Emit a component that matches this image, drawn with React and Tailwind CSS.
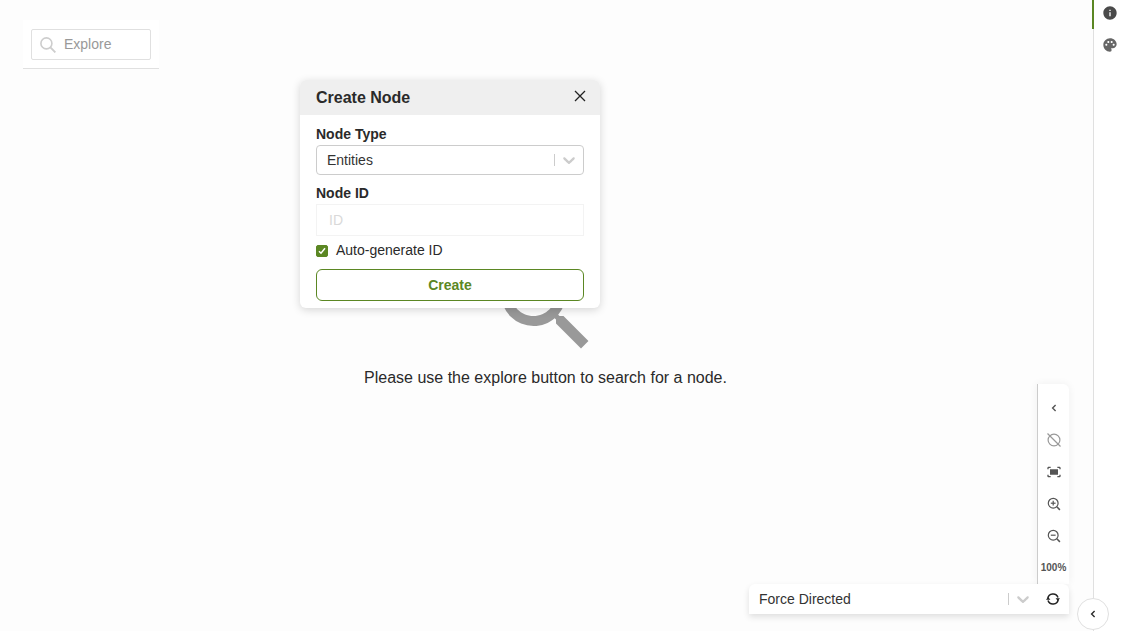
import { useState } from "react";
import { MdFitScreen, MdInfo, MdPalette, MdSearch } from "react-icons/md";

function ChevronDown() {
  return (
    <svg className="size-5 fill-[#cccccc]" viewBox="0 0 20 20" aria-hidden="true">
      <path d="M4.516 7.548c0.436-0.446 1.043-0.481 1.576 0l3.908 3.747 3.908-3.747c0.533-0.481 1.141-0.446 1.574 0 0.436 0.445 0.408 1.197 0 1.615-0.406 0.418-4.695 4.502-4.695 4.502-0.217 0.223-0.502 0.335-0.787 0.335s-0.57-0.112-0.789-0.335c0 0-4.287-4.084-4.695-4.502s-0.436-1.17 0-1.615z" />
    </svg>
  );
}

function ChevronLeft() {
  return (
    <svg className="size-4" viewBox="0 0 16 16" fill="none" stroke="currentColor" strokeWidth="1.4" aria-hidden="true">
      <path d="M9.6 5 6.6 8l3 3" />
    </svg>
  );
}

function ThinSearch() {
  return (
    <svg className="size-4 shrink-0" viewBox="0 0 16 16" fill="none" stroke="#cdcdcd" strokeWidth="1.6" aria-hidden="true">
      <circle cx="6.4" cy="6.4" r="5.5" />
      <path d="m10.4 10.4 5 5" strokeWidth="1.9" />
    </svg>
  );
}

function ZoomIcon({ plus = false }) {
  return (
    <svg className="size-4" viewBox="0 0 16 16" fill="none" stroke="currentColor" strokeWidth="1.2" aria-hidden="true">
      <circle cx="7.2" cy="7.2" r="4.9" />
      <path d="m10.8 10.8 3.1 3.1" strokeWidth="1.5" />
      <path d="M4.8 7.2h4.8" />
      {plus && <path d="M7.2 4.8v4.8" />}
    </svg>
  );
}

function CircleOff() {
  return (
    <svg className="size-4" viewBox="0 0 16 16" fill="none" stroke="#999999" strokeWidth="1.2" aria-hidden="true">
      <circle cx="8" cy="8" r="5.9" />
      <path d="m1.5 1.5 13 13" />
    </svg>
  );
}

function SyncIcon() {
  return (
    <svg className="size-4" viewBox="0 0 16 16" fill="none" stroke="#222222" strokeWidth="1.5" aria-hidden="true">
      <path d="M2.8 7.4A5.3 5.3 0 0 1 13 6.4M13.2 8.6A5.3 5.3 0 0 1 3 9.6" />
      <path d="M10.6 7.2h4.4L12.9 9.9zM1 8.8h4.4L3.1 6.1z" fill="#222222" stroke="none" />
    </svg>
  );
}

function Select({ id, label, options, className }) {
  return (
    <div className={`relative flex items-center ${className}`}>
      <select
        id={id}
        aria-label={label}
        className="h-full w-full appearance-none bg-transparent pr-10 pl-[10px] text-sm text-[#333333] outline-none"
      >
        {options.map((o) => (
          <option key={o}>{o}</option>
        ))}
      </select>
      <span className="pointer-events-none absolute inset-y-0 right-1 flex items-center gap-1">
        <span className="h-3 w-px bg-[#cccccc]" />
        <ChevronDown />
      </span>
    </div>
  );
}

function CreateNodeDialog() {
  const [auto, setAuto] = useState(true);
  return (
    <section
      role="dialog"
      aria-labelledby="create-title"
      className="absolute top-20 left-[300px] w-[300px] overflow-hidden rounded-md bg-white shadow-[0_2px_8px_rgba(0,0,0,0.16)]"
    >
      <header className="flex h-[35px] items-center justify-between bg-[#efefef] pr-3 pl-4">
        <h2 id="create-title" className="text-base font-bold text-[#2a2a2a]">Create Node</h2>
        <button type="button" aria-label="Close" className="flex size-4 items-center justify-center pb-1">
          <svg className="size-3 shrink-0" viewBox="0 0 12 12" stroke="#222222" strokeWidth="1.3" aria-hidden="true">
            <path d="m1 1 10 10M11 1 1 11" />
          </svg>
        </button>
      </header>
      <form className="flex flex-col px-4 pt-[9px] pb-[7px]" onSubmit={(e) => e.preventDefault()}>
        <label htmlFor="node-type" className="text-sm leading-[21px] font-bold">Node Type</label>
        <Select id="node-type" options={["Entities"]} className="mb-2 h-[30px] rounded border border-[#cccccc]" />
        <label htmlFor="node-id" className="text-sm leading-[21px] font-bold">Node ID</label>
        <input
          id="node-id"
          placeholder="ID"
          disabled={auto}
          className="mb-1 h-8 w-full border border-[#f3f3f3] bg-white px-3 text-sm outline-none placeholder:text-[#d9d9d9]"
        />
        <label className="mb-2 flex items-center gap-2 text-sm leading-[21px]">
          <span className="relative flex size-3">
            <input
              type="checkbox"
              checked={auto}
              onChange={(e) => setAuto(e.target.checked)}
              className="peer size-3 appearance-none rounded-xs border border-[#5b8723] checked:bg-[#5b8723]"
            />
            <svg
              className="pointer-events-none absolute inset-0 hidden size-3 peer-checked:block"
              viewBox="0 0 12 12"
              fill="none"
              stroke="white"
              strokeWidth="1.5"
              aria-hidden="true"
            >
              <path d="m3 6.2 2 2 4-5" />
            </svg>
          </span>
          Auto-generate ID
        </label>
        <button type="submit" className="h-8 rounded-md border border-[#5b8723] text-sm font-bold text-[#5b8723]">
          Create
        </button>
      </form>
    </section>
  );
}

const tool = "flex h-8 w-full items-center justify-center text-[#555555]";

export default function App() {
  return (
    <div className="flex h-screen overflow-hidden bg-[#fdfdfd] font-['Liberation_Sans',Arial,sans-serif] text-[#2a2a2a]">
      <main className="relative flex min-w-0 flex-1 flex-col items-center justify-center pt-1 pr-0.5">
        <MdSearch className="size-30 text-[#999999]" aria-hidden="true" />
        <p className="text-base">Please use the explore button to search for a node.</p>

        <div className="absolute top-5 left-[23px] border-b border-[#e0e0e0] bg-white px-2 pt-[9px] pb-2">
          <label className="flex h-[31px] w-30 items-center gap-2 rounded-xs border border-[#e0e0e0] px-2">
            <ThinSearch />
            <input
              aria-label="Explore"
              placeholder="Explore"
              className="w-full min-w-0 bg-transparent pb-0.5 text-sm outline-none placeholder:text-[#999999]"
            />
          </label>
        </div>

        <CreateNodeDialog />

        <div className="absolute right-6 bottom-[17px] flex w-80 flex-col items-end">
          <div className="flex w-8 flex-col rounded-tr-md border-l border-[#cccccc] bg-white pt-2 shadow-[0_0_8px_rgba(0,0,0,0.06)]">
            <button type="button" aria-label="Collapse tools" className={tool}><ChevronLeft /></button>
            <button type="button" aria-label="Clear canvas" className={tool}><CircleOff /></button>
            <button type="button" aria-label="Fit to screen" className={tool}><MdFitScreen className="size-4" /></button>
            <button type="button" aria-label="Zoom in" className={tool}><ZoomIcon plus /></button>
            <button type="button" aria-label="Zoom out" className={tool}><ZoomIcon /></button>
            <span className={`${tool} pb-0.5 text-[10px] font-bold`}>100%</span>
          </div>
          <div className="relative flex h-[30px] w-full items-center rounded-t-md bg-white shadow-[0_3px_6px_rgba(0,0,0,0.12)]">
            <Select label="Layout" options={["Force Directed"]} className="h-full flex-1" />
            <button type="button" aria-label="Run layout" className="flex h-full w-8 items-center justify-center">
              <SyncIcon />
            </button>
          </div>
        </div>
      </main>

      <aside className="relative flex w-8 flex-col border-l border-[#e0e0e0] bg-white">
        <button type="button" aria-label="Details" className="flex h-[29px] items-center justify-center pb-[3px] text-[#4a4a4a]">
          <MdInfo className="size-4" />
        </button>
        <span className="absolute top-0 -left-0.5 h-[29px] w-0.5 bg-[#5b8723]" />
        <button type="button" aria-label="Styling" className="flex h-8 items-center justify-center text-[#666666]">
          <MdPalette className="size-4" />
        </button>
        <button
          type="button"
          aria-label="Open sidebar"
          className="absolute bottom-px -left-[17px] flex size-8 items-center justify-center rounded-full border border-[#e0e0e0] bg-white"
        >
          <ChevronLeft />
        </button>
      </aside>
    </div>
  );
}
